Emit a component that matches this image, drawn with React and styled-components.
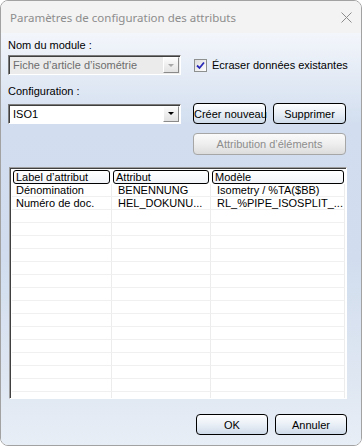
import styled, { createGlobalStyle } from 'styled-components';

const GlobalStyle = createGlobalStyle`
  html, body {
    margin: 0;
    padding: 0;
    background: #ffffff;
  }
  body {
    font-family: "Liberation Sans", Arial, sans-serif;
    font-size: 11px;
    color: #000;
  }
`;

const Window = styled.div`
  width: 362px;
  height: 446px;
  box-sizing: border-box;
  border: 1px solid #a2a2a2;
  border-radius: 8px;
  overflow: hidden;
  display: flex;
  flex-direction: column;
`;

const TitleBar = styled.div`
  height: 32px;
  flex: none;
  background: #f3f3f3;
  display: flex;
  align-items: center;
  justify-content: space-between;
  padding: 0 9px 0 9px;
  font-family: "Noto Sans", "Open Sans", sans-serif;
  font-size: 11.5px;
  color: #8d8d8d;
`;

const CloseIcon = styled.svg`
  width: 11px;
  height: 11px;
  stroke: #8c8c8c;
  stroke-width: 1;
  fill: none;
`;

const Body = styled.div`
  flex: 1;
  display: flex;
  flex-direction: column;
  padding: 6px 15px 0 7px;
  background: linear-gradient(to bottom, #f3f6fb 0%, #d2deef 22%, #d1ddee 55%, #dfe7f2 85%, #e8eef6 100%);
`;

const Label = styled.div`
  line-height: 13px;
  height: 13px;
  margin-top: ${({ top }) => top || 0}px;
`;

const Row = styled.div`
  display: grid;
  grid-template-columns: 173px 1fr;
  column-gap: 12px;
  align-items: center;
  margin-top: ${({ top }) => top || 0}px;
`;

const Combo = styled.div`
  height: 20px;
  box-sizing: border-box;
  display: flex;
  align-items: center;
  border: 1px solid;
  border-color: #7c7c7c #ffffff #ffffff #7c7c7c;
  box-shadow: inset 1px 1px 0 #3f3f3f;
  background: ${({ disabled }) => (disabled ? '#ebebeb' : '#ffffff')};
  color: ${({ disabled }) => (disabled ? '#6d6d6d' : '#000')};
  padding: 1px 1px 1px 4px;
`;

const ComboText = styled.span`
  flex: 1;
  white-space: nowrap;
  line-height: 14px;
`;

const DropButton = styled.div`
  width: 16px;
  height: 16px;
  box-sizing: border-box;
  display: flex;
  align-items: center;
  justify-content: center;
  border: 1px solid;
  border-color: #ffffff #8a8a8a #8a8a8a #ffffff;
  background: linear-gradient(to bottom, #fbfbfb, #e2e2e2);

  &::after {
    content: '';
    border-left: 3px solid transparent;
    border-right: 3px solid transparent;
    border-top: 3px solid ${({ disabled }) => (disabled ? '#a8a8a8' : '#000')};
  }
`;

const CheckRow = styled.label`
  display: flex;
  align-items: center;
  gap: 5px;
  padding-left: 1px;
  white-space: nowrap;
`;

const CheckBox = styled.span`
  width: 13px;
  height: 13px;
  box-sizing: border-box;
  border: 1px solid #8e8f8f;
  background: linear-gradient(135deg, #dcdcdc, #ffffff);
  display: flex;
  align-items: center;
  justify-content: center;
`;

const CheckMark = styled.svg`
  width: 9px;
  height: 9px;
  fill: none;
  stroke: #2a2ab8;
  stroke-width: 1.8px;
`;

const ButtonGroup = styled.div`
  display: flex;
  gap: 7px;
  justify-content: ${({ end }) => (end ? 'flex-end' : 'flex-start')};
  margin-top: ${({ top }) => top || 0}px;
  margin-right: ${({ shift }) => shift || 0}px;
`;

const Button = styled.button`
  font: inherit;
  width: ${({ w }) => w || 73}px;
  height: ${({ h }) => h || 21}px;
  padding: 0;
  border-radius: 4px;
  border: 1px solid ${({ disabled }) => (disabled ? '#a6a6a6' : '#000')};
  color: ${({ disabled }) => (disabled ? '#8d8d8d' : '#000')};
  background: ${({ disabled }) =>
    disabled
      ? 'linear-gradient(to bottom, #fbfbfb 0%, #eeeeee 50%, #dcdcdc 100%)'
      : 'linear-gradient(to bottom, #fdfeff 0%, #e9eff6 50%, #cfdbea 100%)'};
  white-space: nowrap;
  text-align: center;
`;

const Table = styled.div`
  margin: 12px -1px 0 1px;
  height: 232px;
  box-sizing: border-box;
  border: 1px solid;
  border-color: #9d9d9d #ffffff #ffffff #9d9d9d;
  box-shadow: inset 1px 1px 0 #404040;
  background: #ffffff;
  padding: 2px 1px 0 2px;
  overflow: hidden;
`;

const Grid = styled.div`
  display: grid;
  grid-template-columns: 100px 99px 1fr;
`;

const HeadCell = styled.div`
  height: 14px;
  box-sizing: border-box;
  margin: 0 ${({ last }) => (last ? 1 : 2)}px 0 1px;
  border: 1px solid #000;
  border-radius: 3px;
  background: linear-gradient(to bottom, #ffffff, #f1f4f8);
  padding-left: 2px;
  line-height: 12px;
  white-space: nowrap;
  overflow: hidden;
`;

const Cell = styled.div`
  height: 13px;
  box-sizing: border-box;
  border-right: 1px solid #ececec;
  border-bottom: 1px solid #f0f0f0;
  padding-left: ${({ pad }) => pad || 6}px;
  line-height: 12px;
  white-space: nowrap;
  overflow: hidden;
`;

const Footer = styled(ButtonGroup)`
  margin-top: 15px;
`;

const rows = [
  ['Dénomination', 'BENENNUNG', 'Isometry / %TA($BB)'],
  ['Numéro de doc.', 'HEL_DOKUNU...', 'RL_%PIPE_ISOSPLIT_...'],
];

const emptyRows = Array.from({ length: 15 }, () => ['', '', '']);

export default function App() {
  return (
    <>
      <GlobalStyle />
      <Window>
        <TitleBar>
          <span>Paramètres de configuration des attributs</span>
          <CloseIcon viewBox="0 0 11 11">
            <line x1="0.5" y1="0.5" x2="10.5" y2="10.5" />
            <line x1="10.5" y1="0.5" x2="0.5" y2="10.5" />
          </CloseIcon>
        </TitleBar>
        <Body>
          <Label>Nom du module :</Label>
          <Row top={3}>
            <Combo disabled>
              <ComboText>Fiche d’article d’isométrie</ComboText>
              <DropButton disabled />
            </Combo>
            <CheckRow>
              <CheckBox>
                <CheckMark viewBox="0 0 9 9">
                  <polyline points="1,4.5 3.5,7 8,1.5" />
                </CheckMark>
              </CheckBox>
              Écraser données existantes
            </CheckRow>
          </Row>
          <Label top={10}>Configuration :</Label>
          <Row top={5}>
            <Combo>
              <ComboText>ISO1</ComboText>
              <DropButton />
            </Combo>
            <ButtonGroup>
              <Button>Créer nouveau</Button>
              <Button>Supprimer</Button>
            </ButtonGroup>
          </Row>
          <ButtonGroup end top={9}>
            <Button disabled w={153} h={22}>
              Attribution d’éléments
            </Button>
          </ButtonGroup>
          <Table>
            <Grid>
              <HeadCell>Label d’attribut</HeadCell>
              <HeadCell>Attribut</HeadCell>
              <HeadCell last>Modèle</HeadCell>
              {[...rows, ...emptyRows].map((r, i) =>
                r.map((c, j) => (
                  <Cell key={`${i}-${j}`} pad={j === 0 ? 4 : 6}>
                    {c}
                  </Cell>
                ))
              )}
            </Grid>
          </Table>
          <Footer end shift={-1}>
            <Button w={72}>OK</Button>
            <Button w={72}>Annuler</Button>
          </Footer>
        </Body>
      </Window>
    </>
  );
}
